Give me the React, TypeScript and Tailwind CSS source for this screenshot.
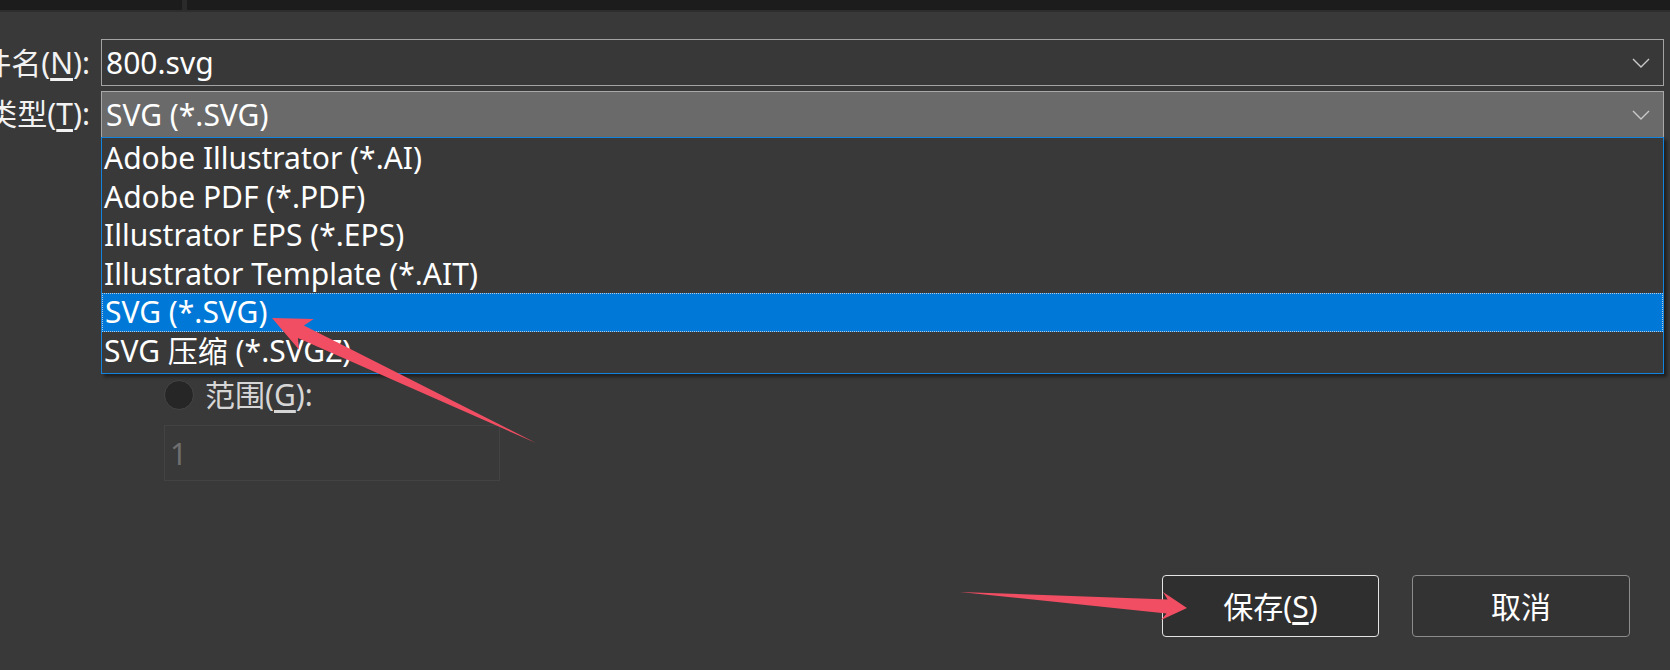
const font = { fontFamily: '"Noto Sans", "Noto Sans CJK SC", sans-serif' };

const Chevron = () => (
  <svg width="18" height="10" viewBox="0 0 18 10" className="shrink-0">
    <path d="M1 1 L9 9 L17 1" fill="none" stroke="#c9c9c9" strokeWidth="1.4" />
  </svg>
);

const fileTypes = [
  'Adobe Illustrator (*.AI)',
  'Adobe PDF (*.PDF)',
  'Illustrator EPS (*.EPS)',
  'Illustrator Template (*.AIT)',
  'SVG (*.SVG)',
  'SVG 压缩 (*.SVGZ)',
];

const SaveDialog = () => {
  const selected = 4;

  return (
    <div
      className="relative w-[1670px] h-[670px] bg-[#393939] overflow-hidden text-[30px] text-white"
      style={font}
    >
      {/* window title strip */}
      <div className="flex h-[10px] bg-[#1c1c1c]">
        <div className="w-[182px]" />
        <div className="w-[5px] bg-[#2a2a2a]" />
        <div className="flex-1" />
      </div>
      <div className="h-[2px] bg-[#2d2d2d]" />

      <div className="pt-[27px]">
        {/* file name */}
        <div className="flex items-center h-[47px]">
          <div className="w-[90px] flex justify-end overflow-hidden">
            <span className="shrink-0 whitespace-nowrap text-[#f2f2f2] leading-[40px]">
              文件名(<u className="underline-offset-4">N</u>):
            </span>
          </div>
          <div className="ml-[11px] mr-[6px] flex-1 h-full flex items-center justify-between border border-[#a3a3a3] bg-[#383838] pl-[4px] pr-[13px]">
            <span className="leading-none">800.svg</span>
            <Chevron />
          </div>
        </div>

        {/* file type */}
        <div className="flex items-center h-[46px] mt-[5px]">
          <div className="w-[90px] flex justify-end overflow-hidden">
            <span className="shrink-0 whitespace-nowrap text-[#f2f2f2] leading-[40px]">
              保存类型(<u className="underline-offset-4">T</u>):
            </span>
          </div>
          <div className="relative ml-[11px] mr-[6px] flex-1 h-full">
            <div className="h-full flex items-center justify-between border border-b-0 border-[#a8a8a8] bg-[#6a6a6a] pl-[4px] pr-[13px]">
              <span className="leading-none">SVG (*.SVG)</span>
              <Chevron />
            </div>
            {/* open dropdown */}
            <div className="absolute left-0 right-0 top-full z-10 border border-[#1383e0] bg-[#393939] pt-[1px] pb-[3px] shadow-[3px_3px_3px_rgba(0,0,0,0.45)]">
              {fileTypes.map((t, i) => (
                <div
                  key={t}
                  className={`h-[38.5px] flex items-center pl-[2px] whitespace-nowrap leading-none ${
                    i === selected
                      ? 'bg-[#0078d7] border border-dotted border-[#b9c9d8]'
                      : ''
                  }`}
                >
                  {t}
                </div>
              ))}
            </div>
          </div>
        </div>

        {/* range option */}
        <div className="flex items-center h-[30px] mt-[243px] pl-[164px]">
          <div className="w-[30px] h-[30px] rounded-full bg-[#262626] border border-[#454545]" />
          <span className="ml-[11px] text-[#d6d6d6] leading-none">
            范围(<u className="underline-offset-4">G</u>):
          </span>
        </div>
        <div className="ml-[164px] mt-[15px] w-[336px] h-[56px] border border-[#434343] flex items-center pl-[5px] text-[#6f6f6f]">
          1
        </div>

        {/* buttons */}
        <div className="flex justify-end gap-[33px] pr-[40px] mt-[94px]">
          <button className="w-[217px] h-[62px] rounded-[4px] border border-[#e4e4e4] bg-[#2f2f2f] text-white flex items-center justify-center">
            保存(<u className="underline-offset-4">S</u>)
          </button>
          <button className="w-[218px] h-[62px] rounded-[4px] border border-[#8c8c8c] bg-[#333333] text-white flex items-center justify-center">
            取消
          </button>
        </div>
      </div>

      {/* annotation arrows */}
      <svg
        className="absolute inset-0 z-20 pointer-events-none"
        width="1670"
        height="670"
        viewBox="0 0 1670 670"
      >
        <polygon
          points="272,318 313.7,318.9 303.9,325.4 536,443 297.9,338 299.1,349.7"
          fill="#f24e63"
        />
        <polygon
          points="1187,608 1163,592 1167.6,599.6 960,592 1166.6,613.6 1161,620"
          fill="#f24e63"
        />
      </svg>
    </div>
  );
};

export default function App() {
  return <SaveDialog />;
}
